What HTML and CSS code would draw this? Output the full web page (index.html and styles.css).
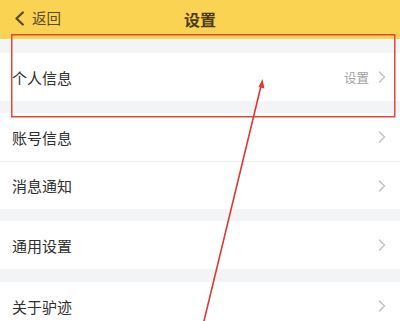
FILE: index.html
```html
<!DOCTYPE html>
<html lang="zh">
<head>
<meta charset="utf-8">
<link rel="stylesheet" href="styles.css">
</head>
<body>
<div class="page">
  <header class="header">
    <div class="back">
      <svg class="back-icon" width="11" height="15" viewBox="0 0 11 15"><path d="M8.8 1.5 L2.5 7.5 L8.8 13.5" fill="none" stroke="#5b4a22" stroke-width="2.3" stroke-linecap="round" stroke-linejoin="round"/></svg>
      <span class="back-text">返回</span>
    </div>
    <div class="title">设置</div>
  </header>
  <div class="gap gap-top"></div>
  <div class="row">
    <span class="label">个人信息</span>
    <span class="right"><span class="hint">设置</span><svg class="chev" width="8" height="12" viewBox="0 0 8 12"><path d="M1.5 1 L6.5 6 L1.5 11" fill="none" stroke="#c4c4c4" stroke-width="1.6" stroke-linecap="round" stroke-linejoin="round"/></svg></span>
  </div>
  <div class="gap"></div>
  <div class="row">
    <span class="label">账号信息</span>
    <span class="right"><svg class="chev" width="8" height="12" viewBox="0 0 8 12"><path d="M1.5 1 L6.5 6 L1.5 11" fill="none" stroke="#c4c4c4" stroke-width="1.6" stroke-linecap="round" stroke-linejoin="round"/></svg></span>
  </div>
  <div class="divider"></div>
  <div class="row row-short">
    <span class="label">消息通知</span>
    <span class="right"><svg class="chev" width="8" height="12" viewBox="0 0 8 12"><path d="M1.5 1 L6.5 6 L1.5 11" fill="none" stroke="#c4c4c4" stroke-width="1.6" stroke-linecap="round" stroke-linejoin="round"/></svg></span>
  </div>
  <div class="gap"></div>
  <div class="row">
    <span class="label">通用设置</span>
    <span class="right"><svg class="chev" width="8" height="12" viewBox="0 0 8 12"><path d="M1.5 1 L6.5 6 L1.5 11" fill="none" stroke="#c4c4c4" stroke-width="1.6" stroke-linecap="round" stroke-linejoin="round"/></svg></span>
  </div>
  <div class="gap gap-13"></div>
  <div class="row">
    <span class="label">关于驴迹</span>
    <span class="right"><svg class="chev" width="8" height="12" viewBox="0 0 8 12"><path d="M1.5 1 L6.5 6 L1.5 11" fill="none" stroke="#c4c4c4" stroke-width="1.6" stroke-linecap="round" stroke-linejoin="round"/></svg></span>
  </div>

  <svg class="annot" width="400" height="321" viewBox="0 0 400 321">
    <rect x="11.75" y="34.75" width="383" height="82" fill="none" stroke="#e2463f" stroke-width="1.5"/>
    <line x1="261" y1="86" x2="203" y2="325" stroke="#d83a34" stroke-width="1.6"/>
    <polygon points="262.5,79 264.5,88.5 258.5,87" fill="#d83a34"/>
  </svg>
</div>
</body>
</html>
```

FILE: styles.css
```css
html, body {
  margin: 0;
  padding: 0;
}
body {
  background: #f3f4f6;
  font-family: "Noto Sans CJK SC", "Noto Sans", sans-serif;
  overflow: hidden;
}
.page {
  position: relative;
  width: 400px;
  height: 321px;
  overflow: hidden;
}
.header {
  position: relative;
  height: 39px;
  background: #fad352;
  display: flex;
  align-items: center;
  padding-left: 14px;
}
.back {
  display: flex;
  align-items: center;
  gap: 7px;
  margin-top: -2px;
}
.back-text {
  font-size: 14.5px;
  color: #5b4a22;
  line-height: 1;
}
.title {
  position: absolute;
  left: 0;
  right: 0;
  top: 0;
  height: 37px;
  display: flex;
  align-items: center;
  justify-content: center;
  font-size: 16px;
  color: #4a3a16;
  font-weight: 600;
  pointer-events: none;
}
.gap {
  height: 12px;
  background: #f3f4f6;
}
.gap-top {
  height: 14px;
}
.gap-13 {
  height: 13px;
}
.row {
  height: 48px;
  background: #ffffff;
  display: flex;
  align-items: center;
  justify-content: space-between;
  padding: 0 14px 0 12px;
}
.row-short {
  height: 47px;
}
.divider {
  height: 1px;
  background: #eeeeee;
}
.label {
  font-size: 15px;
  color: #2e2e2e;
}
.right {
  display: flex;
  align-items: center;
  gap: 9px;
}
.hint {
  font-size: 12.5px;
  color: #a0a0a0;
}
.chev {
  display: block;
}
.annot {
  position: absolute;
  left: 0;
  top: 0;
  pointer-events: none;
}
```
